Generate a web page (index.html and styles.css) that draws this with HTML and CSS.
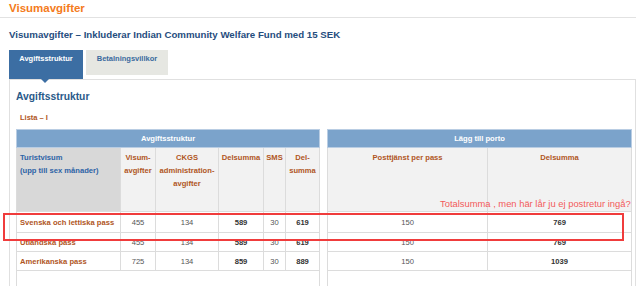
FILE: index.html
```html
<!DOCTYPE html>
<html lang="sv">
<head>
<meta charset="utf-8">
<title>Visumavgifter</title>
<link rel="stylesheet" href="styles.css">
</head>
<body>
<div class="page">
  <h1 class="title">Visumavgifter</h1>
  <h2 class="subtitle">Visumavgifter – Inkluderar Indian Community Welfare Fund med 15 SEK</h2>
  <div class="tabs">
    <div class="tab active">Avgiftsstruktur<span class="arrow"></span></div>
    <div class="tab">Betalningsvillkor</div>
  </div>
  <div class="panel">
    <h3 class="heading">Avgiftsstruktur</h3>
    <p class="lista">Lista – I</p>
    <div class="tables">
      <table class="fees t1">
        <colgroup><col class="c1"><col class="c2"><col class="c3"><col class="c4"><col class="c5"><col class="c6"></colgroup>
        <tr class="band"><th colspan="6">Avgiftsstruktur</th></tr>
        <tr class="head">
          <th class="first">Turistvisum<br>(upp till sex månader)</th>
          <th>Visum-<br>avgifter</th>
          <th>CKGS<br>administration-<br>avgifter</th>
          <th>Delsumma</th>
          <th>SMS</th>
          <th>Del-<br>summa</th>
        </tr>
        <tr class="r1"><td class="name">Svenska och lettiska pass</td><td>455</td><td>134</td><td class="b">589</td><td>30</td><td class="b">619</td></tr>
        <tr class="r2"><td class="name">Utländska pass</td><td>455</td><td>134</td><td class="b">589</td><td>30</td><td class="b">619</td></tr>
        <tr class="r3"><td class="name">Amerikanska pass</td><td>725</td><td>134</td><td class="b">859</td><td>30</td><td class="b">889</td></tr>
        <tr class="rest"><td colspan="6"></td></tr>
      </table>
      <table class="fees t2">
        <colgroup><col class="d1"><col class="d2"></colgroup>
        <tr class="band"><th colspan="2">Lägg till porto</th></tr>
        <tr class="head"><th>Posttjänst per pass</th><th>Delsumma</th></tr>
        <tr class="r1"><td>150</td><td class="b">769</td></tr>
        <tr class="r2"><td>150</td><td class="b">769</td></tr>
        <tr class="r3"><td>150</td><td class="b">1039</td></tr>
        <tr class="rest"><td colspan="2"></td></tr>
      </table>
    </div>
  </div>
  <div class="note">Totalsumma , men här lår ju ej postretur ingå?</div>
  <div class="mark"></div>
</div>
</body>
</html>
```
FILE: styles.css
```css
html, body {
  margin: 0;
  padding: 0;
  background: #ffffff;
}
body {
  font-family: "Liberation Sans", Arial, sans-serif;
  width: 640px;
  height: 286px;
  overflow: hidden;
}
.page {
  position: relative;
  height: 286px;
  overflow: hidden;
}
.title {
  margin: 0;
  width: 627px;
  padding-left: 9px;
  height: 17px;
  line-height: 17px;
  font-size: 11.5px;
  font-weight: bold;
  color: #f47b20;
  border-bottom: 1px solid #e2e2e2;
}
.subtitle {
  margin: 11px 0 0 9px;
  height: 12px;
  line-height: 12px;
  font-size: 9.7px;
  font-weight: bold;
  color: #264d7e;
}
.tabs {
  display: flex;
  align-items: flex-start;
  gap: 3px;
  margin: 9px 0 0 9px;
}
.tab {
  position: relative;
  box-sizing: border-box;
  height: 25px;
  width: 82px;
  padding-top: 4px;
  text-align: center;
  font-size: 7.5px;
  line-height: 10px;
  font-weight: bold;
  color: #3a6a9e;
  background: #e6e7e2;
}
.tab.active {
  width: 74px;
  height: 29px;
  background: #3c6ea3;
  color: #ffffff;
}
.arrow {
  position: absolute;
  left: 32px;
  top: 29px;
  width: 0;
  height: 0;
  border-left: 4px solid transparent;
  border-right: 4px solid transparent;
  border-top: 4px solid #3c6ea3;
}
.panel {
  margin-left: 9px;
  width: 627px;
  height: 207px;
  border: 1px solid #e0e0e0;
  border-bottom: none;
  padding: 0 6px;
  box-sizing: border-box;
  overflow: hidden;
}
.heading {
  margin: 10px 0 0 0;
  height: 14px;
  line-height: 14px;
  font-size: 10.3px;
  font-weight: bold;
  color: #2a5a8a;
}
.lista {
  margin: 9px 0 0 4px;
  height: 10px;
  line-height: 10px;
  font-size: 7.5px;
  font-weight: bold;
  color: #b0561e;
}
.tables {
  display: flex;
  gap: 7px;
  margin-top: 6px;
}
.fees {
  border-collapse: collapse;
  table-layout: fixed;
  font-size: 7.6px;
}
.t1 { width: 303px; }
.t2 { width: 304px; }
.c1 { width: 104px; }
.c2 { width: 35px; }
.c3 { width: 63px; }
.c4 { width: 45px; }
.c5 { width: 22px; }
.c6 { width: 34px; }
.d1 { width: 160px; }
.d2 { width: 144px; }
.fees th, .fees td {
  border: 1px solid #dcdcdc;
  padding: 0;
}
.band th {
  height: 17px;
  background: #7ba3cb;
  color: #ffffff;
  font-weight: bold;
  text-align: center;
  border-color: #b9cde3;
}
.head th {
  height: 64px;
  vertical-align: top;
  padding-top: 3px;
  box-sizing: border-box;
  background: #f2f2f2;
  color: #b0561e;
  font-weight: bold;
  line-height: 13px;
  text-align: center;
}
.head th.first {
  background: #d8d8d8;
  color: #2d63a6;
  text-align: left;
  padding-left: 3px;
}
.fees td {
  text-align: center;
  color: #555555;
}
.fees td.b {
  font-weight: bold;
  color: #333333;
}
.fees td.name {
  text-align: left;
  padding-left: 3px;
  font-weight: bold;
  color: #b0561e;
}
.r1 td { height: 20px; }
.r2 td { height: 18px; }
.r3 td { height: 18px; }
.rest td {
  height: 30px;
  border-bottom: none;
}
.note {
  position: absolute;
  left: 440px;
  top: 198px;
  font-size: 9.4px;
  line-height: 11px;
  color: #f25a5a;
  white-space: nowrap;
}
.mark {
  position: absolute;
  left: 3px;
  top: 213px;
  width: 617px;
  height: 24px;
  border: 2px solid #f03c3c;
}
```
